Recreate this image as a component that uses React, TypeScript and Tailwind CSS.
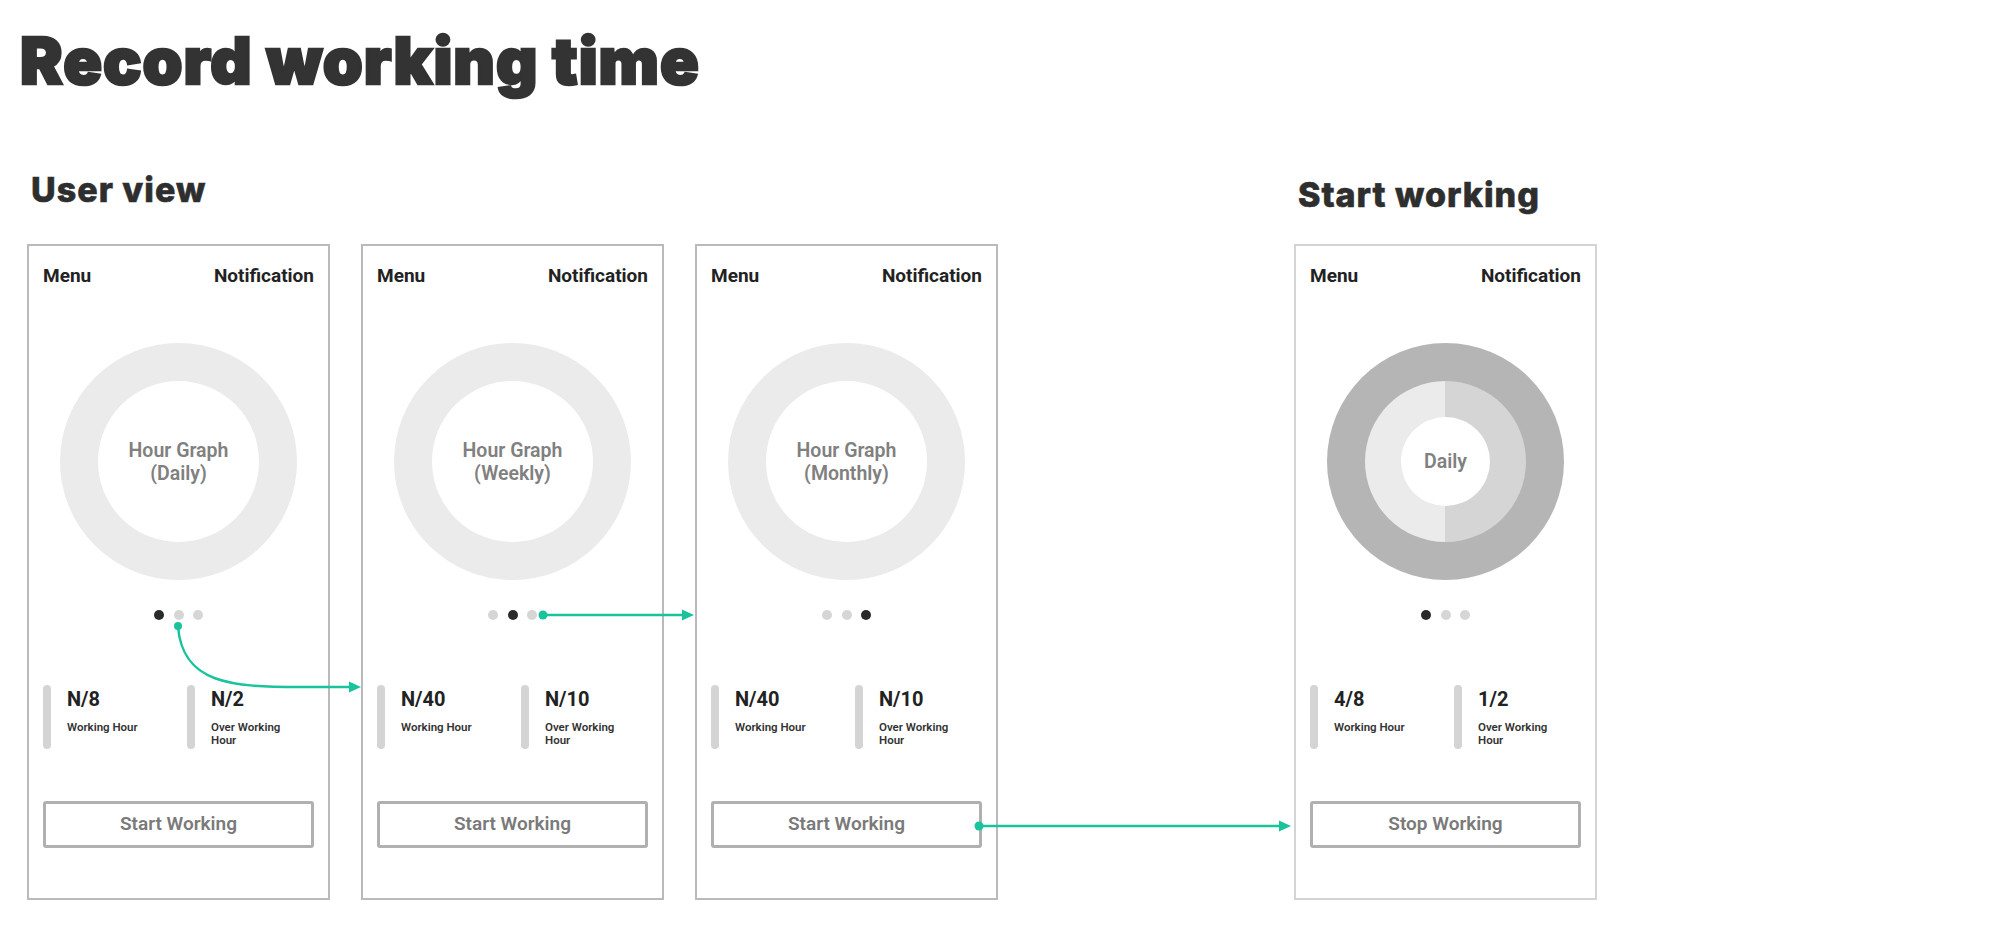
import React from 'react'

type Stat = { value: string; label: string[] }

const green = '#19c39b'

function Dots({ active }: { active: number }) {
  return (
    <div className="flex justify-center gap-[9.5px]">
      {[0, 1, 2].map((i) => (
        <span
          key={i}
          className={
            i === active
              ? 'w-[10px] h-[10px] rounded-full bg-[#2a2a2a]'
              : 'w-[10px] h-[10px] rounded-full bg-[#d6d6d6]'
          }
        />
      ))}
    </div>
  )
}

function StatItem({ stat }: { stat: Stat }) {
  return (
    <div className="flex">
      <div className="w-[8px] h-[64px] rounded-full bg-[#d4d4d4]" />
      <div className="ml-[16px] pt-[2px]">
        <div className="text-[20px] leading-[24px] font-bold text-[#222]">{stat.value}</div>
        <div className="mt-[10px] text-[11.5px] leading-[13px] font-semibold text-[#333]">
          {stat.label.map((l) => (
            <div key={l}>{l}</div>
          ))}
        </div>
      </div>
    </div>
  )
}

function HourGraph({ label }: { label: string }) {
  return (
    <div className="w-[237px] h-[237px] rounded-full border-[38px] border-[#ebebeb] flex items-center justify-center">
      <div className="text-center text-[19.5px] leading-[23px] font-semibold text-[#808080]">
        <div>Hour Graph</div>
        <div>({label})</div>
      </div>
    </div>
  )
}

function DailyGraph() {
  return (
    <div className="w-[237px] h-[237px] rounded-full bg-[#b5b5b5] flex items-center justify-center">
      <div className="w-[161px] h-[161px] rounded-full bg-[linear-gradient(to_right,#ebebeb_50%,#d5d5d5_50%)] flex items-center justify-center">
        <div className="w-[89px] h-[89px] rounded-full bg-white flex items-center justify-center text-[19.5px] font-semibold text-[#808080]">
          Daily
        </div>
      </div>
    </div>
  )
}

function Phone({
  graph,
  active,
  stats,
  button,
  light,
}: {
  graph: React.ReactNode
  active: number
  stats: Stat[]
  button: string
  light?: boolean
}) {
  return (
    <div
      className={
        light
          ? 'w-[303px] h-[656px] border-2 border-[#d4d4d4] px-[14px] pt-[20px] flex flex-col'
          : 'w-[303px] h-[656px] border-2 border-[#bababa] px-[14px] pt-[20px] flex flex-col'
      }
    >
      <div className="flex justify-between text-[19px] leading-[20px] font-bold text-[#222]">
        <span>Menu</span>
        <span>Notification</span>
      </div>
      <div className="mt-[57px] flex justify-center">{graph}</div>
      <div className="mt-[30px]">
        <Dots active={active} />
      </div>
      <div className="mt-[65px] grid grid-cols-[144px_1fr]">
        {stats.map((s) => (
          <StatItem key={s.value + s.label[0]} stat={s} />
        ))}
      </div>
      <div className="mt-[52px] h-[47px] border-[3px] border-[#b0b0b0] rounded-[3px] flex items-center justify-center text-[19px] font-semibold text-[#7a7a7a]">
        {button}
      </div>
    </div>
  )
}

function Arrows() {
  return (
    <svg className="absolute inset-0 pointer-events-none" width="2000" height="935" viewBox="0 0 2000 935">
      <g fill={green} stroke={green} strokeWidth="2.5">
        <circle cx="178" cy="626" r="4" stroke="none" />
        <path d="M178 626 C182 684 232 687 300 687 L350 687" fill="none" />
        <polygon points="361,687 349,681.5 349,692.5" stroke="none" />

        <circle cx="543" cy="615" r="4.5" stroke="none" />
        <line x1="543" y1="615" x2="683" y2="615" />
        <polygon points="694,615 682,609.5 682,620.5" stroke="none" />

        <circle cx="979" cy="826" r="4.5" stroke="none" />
        <line x1="979" y1="826" x2="1280" y2="826" />
        <polygon points="1291,826 1279,820.5 1279,831.5" stroke="none" />
      </g>
    </svg>
  )
}

export default function App() {
  const daily: Stat[] = [
    { value: 'N/8', label: ['Working Hour'] },
    { value: 'N/2', label: ['Over Working', 'Hour'] },
  ]
  const longer: Stat[] = [
    { value: 'N/40', label: ['Working Hour'] },
    { value: 'N/10', label: ['Over Working', 'Hour'] },
  ]
  const working: Stat[] = [
    { value: '4/8', label: ['Working Hour'] },
    { value: '1/2', label: ['Over Working', 'Hour'] },
  ]

  return (
    <div className="relative w-[2000px] h-[935px] bg-white overflow-hidden font-['Roboto',sans-serif]">
      <h1 className="pt-[29px] ml-[20px] text-[64px] leading-none font-black tracking-[1px] text-[#333] [-webkit-text-stroke:2.5px_#333] font-['Inter',sans-serif]">
        Record working time
      </h1>

      <div className="mt-[80px] ml-[27px] flex items-start">
        {/* user view */}
        <div>
          <h2 className="pl-[4px] mb-[37px] text-[34px] leading-none font-extrabold tracking-[1px] text-[#2e2e2e] [-webkit-text-stroke:0.6px_#2e2e2e] font-['Inter',sans-serif]">
            User view
          </h2>
          <div className="flex gap-[31px]">
            <Phone graph={<HourGraph label="Daily" />} active={0} stats={daily} button="Start Working" />
            <Phone graph={<HourGraph label="Weekly" />} active={1} stats={longer} button="Start Working" />
            <Phone graph={<HourGraph label="Monthly" />} active={2} stats={longer} button="Start Working" />
          </div>
        </div>

        {/* start working */}
        <div className="ml-[296px] pt-[5px]">
          <h2 className="pl-[4px] mb-[32px] text-[34px] leading-none font-extrabold tracking-[1px] text-[#2e2e2e] [-webkit-text-stroke:0.6px_#2e2e2e] font-['Inter',sans-serif]">
            Start working
          </h2>
          <Phone graph={<DailyGraph />} active={0} stats={working} button="Stop Working" light />
        </div>
      </div>

      <Arrows />
    </div>
  )
}
